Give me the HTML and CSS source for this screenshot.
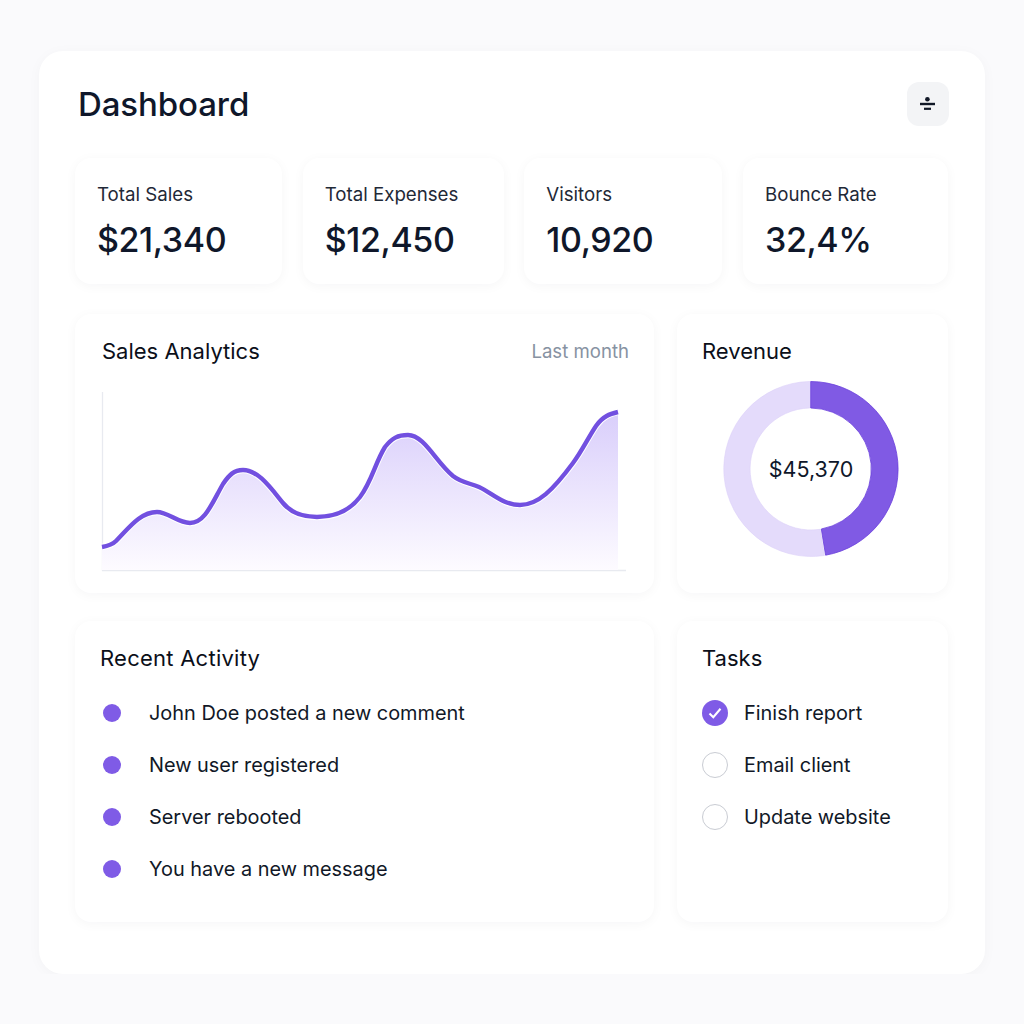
FILE: index.html
```html
<!DOCTYPE html>
<html lang="en">
  <head>
    <meta charset="UTF-8" />
    <meta name="viewport" content="width=device-width, initial-scale=1.0" />
    <title>Dashboard</title>
    <link rel="stylesheet" href="styles.css">
  </head>
  <body>
    <main class="shell">
      <header class="top">
        <h1>Dashboard</h1>
        <button class="icon-button" type="button" aria-label="Options">
          <svg width="20" height="20" viewBox="918 94 20 20">
            <circle cx="927.4" cy="99.2" r="2.3" fill="#111827" />
            <path d="M920 104H935" stroke="#111827" stroke-width="2.4" />
            <path d="M924 108.8H931" stroke="#111827" stroke-width="2.2" />
          </svg>
        </button>
      </header>

      <section class="stats">
        <div class="card stat">
          <p class="stat-label">Total Sales</p>
          <p class="stat-value">$21,340</p>
        </div>
        <div class="card stat">
          <p class="stat-label">Total Expenses</p>
          <p class="stat-value">$12,450</p>
        </div>
        <div class="card stat">
          <p class="stat-label">Visitors</p>
          <p class="stat-value">10,920</p>
        </div>
        <div class="card stat">
          <p class="stat-label">Bounce Rate</p>
          <p class="stat-value">32,4%</p>
        </div>
      </section>

      <section class="panels panels-charts">
        <div class="card analytics">
          <div class="card-head">
            <h2>Sales Analytics</h2>
            <span class="muted">Last month</span>
          </div>
          <svg class="chart" width="530" height="184" viewBox="100 390 530 184">
            <defs>
              <linearGradient id="area" x1="0" y1="0" x2="0" y2="1">
                <stop offset="0" stop-color="#d9cefb" />
                <stop offset="1" stop-color="#fdfbff" />
              </linearGradient>
              <path id="curve" d="M102 547C108 546 112 545 116 541C128 529 140 512 157 512C168 512 178 523 190 523C205 523 212 503 223 484C229 475 234 470 243 470C258 470 270 487 283 503C291 513 303 517 317 517C335 517 350 510 360 497C372 481 375 463 385 447C392 438 398 435 408 435C424 435 436 462 453 476C462 483 470 483 479 487C492 493 503 505 520 505C538 505 553 490 573 463C582 451 588 438 596 426C603 416 610 414 618 412" />
            </defs>
            <path d="M102.5 392V570.5H626" fill="none" stroke="#e8eaf0" stroke-width="1.3" />
            <path fill="url(#area)" d="M102 547C108 546 112 545 116 541C128 529 140 512 157 512C168 512 178 523 190 523C205 523 212 503 223 484C229 475 234 470 243 470C258 470 270 487 283 503C291 513 303 517 317 517C335 517 350 510 360 497C372 481 375 463 385 447C392 438 398 435 408 435C424 435 436 462 453 476C462 483 470 483 479 487C492 493 503 505 520 505C538 505 553 490 573 463C582 451 588 438 596 426C603 416 610 414 618 412V570H102Z" />
            <use href="#curve" fill="none" stroke="#fff" stroke-width="6.4" />
            <use href="#curve" fill="none" stroke="#7250e0" stroke-width="4.4" />
          </svg>
        </div>

        <div class="card revenue">
          <h2>Revenue</h2>
          <div class="donut">
            <svg width="180" height="180" viewBox="721 379 180 180">
              <path fill="#e4dbfb" stroke="#dcd0f8" stroke-width="0.6" d="M809.8 381.5A87.5 87.5 0 1 0 824.4 555.5L820.2 529.3A61 61 0 1 1 809.8 408Z" />
              <path fill="#805ae4" stroke="#6a3fdc" stroke-width="0.8" d="M810.7 381.5A87.5 87.5 0 0 1 825.6 555.2L821.3 529A61 61 0 0 0 810.7 408Z" />
            </svg>
            <span class="donut-total">$45,370</span>
          </div>
        </div>
      </section>

      <section class="panels panels-lists">
        <div class="card activity">
          <h2>Recent Activity</h2>
          <ul class="rows">
            <li class="row"><span class="dot"></span>John Doe posted a new comment</li>
            <li class="row"><span class="dot"></span>New user registered</li>
            <li class="row"><span class="dot"></span>Server rebooted</li>
            <li class="row"><span class="dot"></span>You have a new message</li>
          </ul>
        </div>

        <div class="card tasks">
          <h2>Tasks</h2>
          <ul class="rows">
            <li class="row">
              <span class="check check-done">
                <svg width="16" height="16" viewBox="0 0 16 16">
                  <path d="M2.5 8.5L6.3 12.2L13.5 3.8" fill="none" stroke="#fff" stroke-width="2.1" />
                </svg>
              </span>
              Finish report
            </li>
            <li class="row"><span class="check"></span>Email client</li>
            <li class="row"><span class="check"></span>Update website</li>
          </ul>
        </div>
      </section>
    </main>
  </body>
</html>
```

FILE: styles.css
```css
* {
  box-sizing: border-box;
}
body {
  margin: 0;
  background: #fafafc;
  color: #0f172a;
  font-family: Inter, "Liberation Sans", sans-serif;
}
h1,
h2,
p,
ul {
  margin: 0;
  padding: 0;
}
.shell {
  width: 946px;
  height: 923px;
  margin: 51px 0 0 39px;
  padding: 31px 37px 0 36px;
  background: #fff;
  border-radius: 24px;
  box-shadow: 0 2px 14px rgba(17, 24, 39, 0.03);
}
.top {
  display: flex;
  justify-content: space-between;
  align-items: center;
  height: 44px;
  margin-right: -1px;
  padding-left: 3px;
}
h1 {
  font-size: 33px;
  font-weight: 550;
  letter-spacing: -0.1px;
}
.icon-button {
  display: flex;
  align-items: center;
  justify-content: center;
  width: 42px;
  height: 44px;
  padding: 0;
  border: none;
  border-radius: 12px;
  background: #f3f4f6;
}
.card {
  background: #fff;
  border-radius: 16px;
  box-shadow: 0 2px 12px rgba(17, 24, 39, 0.04);
}
.stats {
  display: grid;
  grid-template-columns: 207px 201px 198px 205px;
  justify-content: space-between;
  margin-top: 32px;
}
.stat {
  height: 126px;
  padding: 26px 22px 0;
}
.stat-label {
  font-size: 18.7px;
  line-height: 22px;
  color: #1f2937;
}
.stat-value {
  margin-top: 12px;
  font-size: 34px;
  line-height: 44px;
  font-weight: 500;
  letter-spacing: -0.4px;
}
h2 {
  font-size: 22px;
  line-height: 28px;
  font-weight: 400;
  color: #0b0f19;
}
.activity h2 {
  letter-spacing: 0.25px;
}
.muted {
  font-size: 18.6px;
  color: #8792a2;
}
.panels {
  display: grid;
  grid-template-columns: 579px 271px;
  justify-content: space-between;
}
.panels-charts {
  margin-top: 30px;
}
.panels-charts .card {
  height: 279px;
}
.panels-lists {
  margin-top: 28px;
}
.panels-lists .card {
  height: 301px;
  padding: 23px 25px 0;
}
.analytics {
  padding: 23px 25px 0 27px;
}
.card-head {
  display: flex;
  justify-content: space-between;
  align-items: center;
}
.chart {
  display: block;
  margin: 25px 0 0 -2px;
}
.revenue {
  padding: 23px 25px 0;
}
.donut {
  position: relative;
  width: 180px;
  height: 180px;
  margin: 14px 0 0 19px;
}
.donut svg {
  display: block;
}
.donut-total {
  position: absolute;
  inset: 0;
  display: flex;
  align-items: center;
  justify-content: center;
  font-size: 21.5px;
}
.rows {
  list-style: none;
  margin-top: 15px;
}
.row {
  display: flex;
  align-items: center;
  height: 52px;
  font-size: 19.9px;
  color: #111827;
}
.activity .row {
  gap: 28px;
}
.activity .dot {
  margin-left: 3px;
}
.dot {
  width: 18px;
  height: 18px;
  border-radius: 50%;
  background: #7f5be6;
}
.tasks .row {
  gap: 16px;
}
.check {
  display: flex;
  align-items: center;
  justify-content: center;
  width: 26px;
  height: 26px;
  border: 1.3px solid #c9ccd3;
  border-radius: 50%;
}
.check-done {
  border: none;
  background: #7f5be6;
}
```
